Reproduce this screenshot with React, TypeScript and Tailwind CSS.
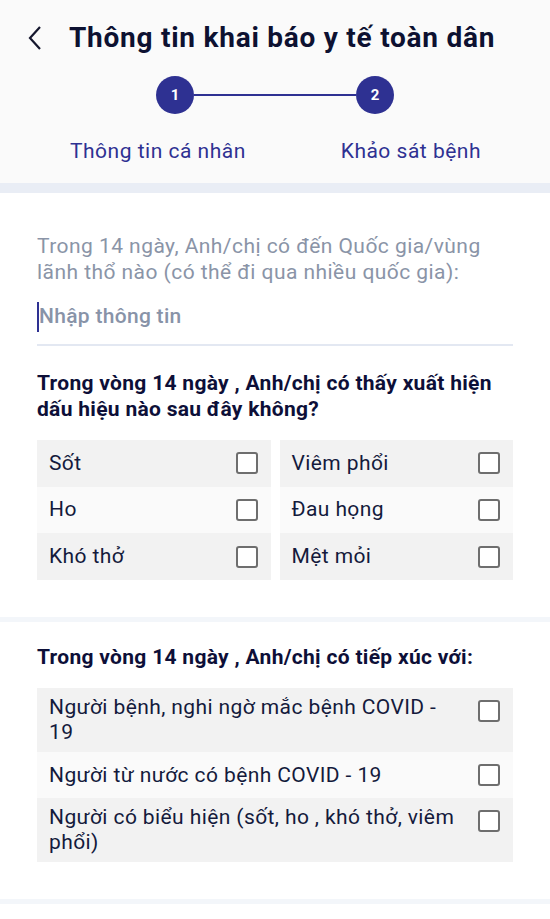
import React from 'react';

function Checkbox() {
  return <div className="w-[22px] h-[22px] shrink-0 rounded-[3px] border-2 border-[#6e6e6e] bg-white" />;
}

export default function App() {
  const symptoms = [
    ['Sốt', 'Viêm phổi'],
    ['Ho', 'Đau họng'],
    ['Khó thở', 'Mệt mỏi'],
  ];
  const contacts = [
    'Người bệnh, nghi ngờ mắc bệnh COVID - 19',
    'Người từ nước có bệnh COVID - 19',
    'Người có biểu hiện (sốt, ho , khó thở, viêm phổi)',
  ];

  return (
    <div className="w-[550px] h-[919px] bg-white font-['Roboto',sans-serif] overflow-hidden">
      {/* Header */}
      <div className="bg-[#fafafa] h-[183px]">
        <div className="flex items-center h-[76px] pl-[27px]">
          <svg width="16" height="26" viewBox="0 0 16 26" className="shrink-0">
            <polyline points="13,2 3,13 13,24" fill="none" stroke="#15172e" strokeWidth="2.2" />
          </svg>
          <h1 className="ml-[26px] text-[28px] font-bold text-[#0d1131] tracking-[0.75px]">
            Thông tin khai báo y tế toàn dân
          </h1>
        </div>
        <div className="flex items-center justify-center">
          <div className="w-[38px] h-[38px] rounded-full bg-[#2e3192] text-white text-[15px] font-bold flex items-center justify-center">
            1
          </div>
          <div className="w-[162px] h-[2px] bg-[#2e3192]" />
          <div className="w-[38px] h-[38px] rounded-full bg-[#2e3192] text-white text-[15px] font-bold flex items-center justify-center">
            2
          </div>
        </div>
        <div className="flex justify-between pl-[70px] pr-[69px] mt-[24px] text-[21px] tracking-[0.5px] leading-[26px] text-[#2e3192]">
          <span>Thông tin cá nhân</span>
          <span>Khảo sát bệnh</span>
        </div>
      </div>
      <div className="h-[10px] bg-[#e9edf5]" />

      {/* Section 1 */}
      <div className="px-[37px] pt-[40px] pb-[37px]">
        <p className="text-[21px] tracking-[0.45px] leading-[26px] text-[#8a94a7]">
          Trong 14 ngày, Anh/chị có đến Quốc gia/vùng lãnh thổ nào (có thể đi qua nhiều quốc gia):
        </p>
        <div className="mt-[17px] flex items-center h-[30px]">
          <div className="w-[2px] h-[30px] bg-[#2e3192]" />
          <span className="text-[21px] tracking-[0.3px] font-medium text-[#8893a8]">Nhập thông tin</span>
        </div>
        <div className="mt-[12px] h-[2px] bg-[#e3e8f2]" />
        <p className="mt-[24px] text-[21px] tracking-[0.3px] leading-[26px] font-bold text-[#0d0f38]">
          Trong vòng 14 ngày , Anh/chị có thấy xuất hiện dấu hiệu nào sau đây không?
        </p>
        <div className="mt-[18px] grid grid-cols-2 gap-x-[9px]">
          {symptoms.map((row, i) =>
            row.map((s) => (
              <div
                key={s}
                className={`flex items-center justify-between h-[46.7px] pl-[12px] pr-[13px] ${
                  i % 2 === 1 ? 'bg-[#fafafa]' : 'bg-[#f2f2f2]'
                }`}
              >
                <span className="text-[21px] tracking-[0.4px] text-[#141a3c]">{s}</span>
                <Checkbox />
              </div>
            ))
          )}
        </div>
      </div>
      <div className="h-[5px] bg-[#f3f6fa]" />

      {/* Section 2 */}
      <div className="px-[37px] pt-[22px] pb-[37px]">
        <p className="text-[21px] tracking-[0.3px] leading-[26px] font-bold text-[#0d0f38]">
          Trong vòng 14 ngày , Anh/chị có tiếp xúc với:
        </p>
        <div className="mt-[18px] flex flex-col">
          {contacts.map((c, i) => (
            <div
              key={c}
              className={`flex items-start min-h-[46px] pl-[12px] pr-[13px] py-[7px] ${
                i % 2 === 1 ? 'bg-[#fafafa]' : 'bg-[#f2f2f2]'
              }`}
            >
              <span className="flex-1 mr-[20px] text-[21px] tracking-[0.4px] leading-[25px] text-[#141a3c] self-center">
                {c}
              </span>
              <div className="mt-[5px]">
                <Checkbox />
              </div>
            </div>
          ))}
        </div>
      </div>
      <div className="h-[5px] bg-[#f3f6fa]" />
    </div>
  );
}
